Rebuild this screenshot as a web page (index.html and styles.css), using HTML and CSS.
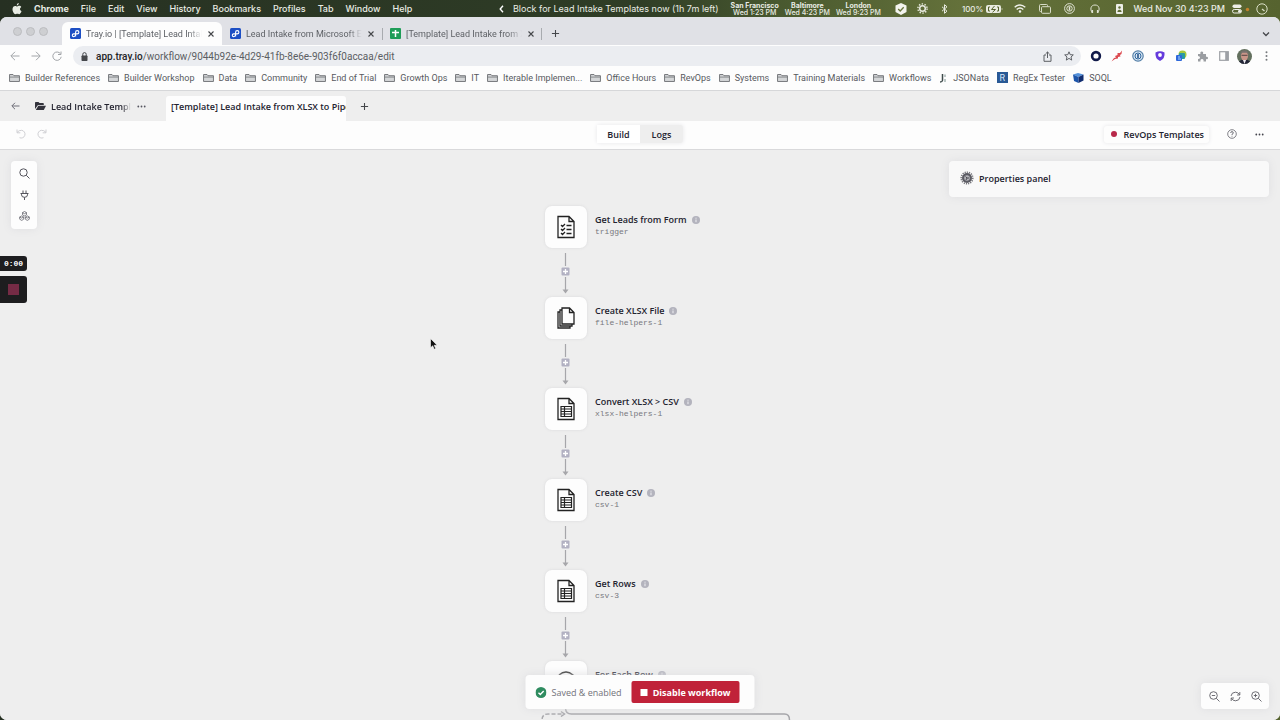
FILE: index.html
```html
<!DOCTYPE html>
<html lang="en">
<head>
    <meta charset="UTF-8">
    <meta name="viewport" content="width=device-width, initial-scale=1.0">
    <title>Tray.io | [Template] Lead Intake</title>
    <link rel="stylesheet" href="styles.css">
</head>
<body>
    <!-- shared icons -->
    <svg class="defs" width="0" height="0" aria-hidden="true">
        <symbol id="folder" viewBox="0 0 12 10"><path d="M.6 8.8V1.2h3.8l1 1.3h6v6.3z" fill="#d4d6d8" stroke="#6c6f73"/><path d="M.8 4h10.4" stroke="#6c6f73" stroke-width=".8"/></symbol>
        <symbol id="tray" viewBox="0 0 11 11"><rect width="11" height="11" rx="1.5" fill="#1d4fc4"/><path d="M5.6 8.6V4.2c0-1 .6-1.6 1.6-1.6s1.7.7 1.7 1.6-.7 1.7-1.7 1.7H3.7c-.8 0-1.4.5-1.4 1.3s.6 1.4 1.4 1.4 1.5-.6 1.5-1.4" fill="none" stroke="#fff" stroke-width="1.1"/></symbol>
        <symbol id="close" viewBox="0 0 8 8"><path d="M1.5 1.5l5 5m0-5l-5 5" stroke="#45474b" stroke-width="1.1"/></symbol>
        <symbol id="plus" viewBox="0 0 10 10"><path d="M5 1v8M1 5h8" stroke="#45474b" stroke-width="1.2"/></symbol>
        <symbol id="info" viewBox="0 0 8 8"><circle cx="4" cy="4" r="4" fill="#b3b3bd"/><path d="M4 3.5v2.7M4 1.7v1" stroke="#f0f0f4" stroke-width="1"/></symbol>
        <symbol id="sheet" viewBox="0 0 18 24"><path d="M1 1.5h11l5 5v16H1zM12 1.5v5h5" fill="none" stroke="#222" stroke-width="1.3"/><path d="M4 9.5h10.5v10H4zM4 12h10.5M4 14.5h10.5M4 17h10.5M7.5 9.5v10" fill="none" stroke="#222" stroke-width="1.2"/></symbol>
        <symbol id="connector" viewBox="0 0 42 49"><path d="M20.500 5v13M20.500 29v14" stroke="#a6a6aa" stroke-width="1.2"/><path d="M17.500 41.500h6l-3 4z" fill="#a6a6aa"/><rect x="16.500" y="19.500" width="8" height="8" rx="1" fill="#b2b1c2"/><path d="M20.500 21v5M18 23.500h5" stroke="#fff" stroke-width="1.3"/></symbol>
    </svg>

    <header class="menubar">
        <nav class="menus">
            <svg class="apple" width="10" height="12" viewBox="0 0 10 12" fill="#e9ece4"><path d="M6.800 0c0 1.300-.9 2.300-2 2.400C4.700 1.200 5.700.2 6.800 0zM9.300 4C8.500 4.500 8 5.200 8 6.100c0 1 .6 1.800 1.500 2.200-.6 1.600-1.500 2.900-2.400 2.900-.7 0-1-.4-1.900-.4s-1.200.4-1.800.4C2.100 11.200.5 8.700.5 6.300.5 4.100 1.800 2.900 3.200 2.900c.9 0 1.400.5 2 .5s1.200-.6 2.200-.6c.8 0 1.500.5 1.900 1.200z"/></svg>
            <b>Chrome</b><span>File</span><span>Edit</span><span>View</span><span>History</span><span>Bookmarks</span><span>Profiles</span><span>Tab</span><span>Window</span><span>Help</span>
        </nav>
        <div class="status">
            <div class="event"><svg width="5" height="8" viewBox="0 0 5 8"><path d="M4 .8L1.200 4 4 7.200" fill="none" stroke="#fff" stroke-width="1.400"/></svg><span>Block for Lead Intake Templates now (1h 7m left)</span></div>
            <div class="clocks">
                <div><b>San Francisco</b>Wed 1:23 PM</div>
                <div><b>Baltimore</b>Wed 4:23 PM</div>
                <div><b>London</b>Wed 9:23 PM</div>
            </div>
            <div class="tray-icons">
                <svg width="12" height="12" viewBox="0 0 12 12"><path d="M6 0l5.500 2.500v6.500L6 12 .5 9V2.500z" fill="#f3f4ee"/><path d="M3.200 6l2 2 3.500-3.800" fill="none" stroke="#68753d" stroke-width="1.300"/></svg>
                <svg width="11" height="11" viewBox="0 0 11 11" fill="none" stroke="#e8eadf"><circle cx="5.500" cy="5.500" r="2.800" stroke-width="1.500"/><circle cx="5.500" cy="5.500" r="4.600" stroke-width="1.400" stroke-dasharray="1.400 1.500"/></svg>
                <svg width="7" height="10" viewBox="0 0 7 10" fill="none" stroke="#e8eadf"><path d="M1 2.800l5 4.400L3.500 9.300V.7L6 2.800 1 7.200"/></svg>
            </div>
            <div class="battery"><span>100%</span><svg width="17" height="8" viewBox="0 0 17 8"><rect width="15" height="8" rx="2" fill="#e8eadf"/><path d="M16 3v2" stroke="#a9b08c"/><path d="M4 2H2.500v4H4M11 2h1.500v4H11M8.500 1L5.500 4.500h4L6.500 7.300" fill="none" stroke="#56632f"/></svg></div>
            <div class="tray-icons wide">
                <svg width="12" height="9" viewBox="0 0 12 9" fill="none" stroke="#f0f1ea" stroke-width="1.400"><path d="M.7 3.300q5.300-4.600 10.600 0M2.700 5.500q3.300-2.800 6.600 0"/><circle cx="6" cy="7.500" r=".6"/></svg>
                <svg width="12" height="10" viewBox="0 0 12 10" fill="none" stroke="#d7dbc7"><path d="M2.500 7.500h-1q-1 0-1-1v-5q0-1 1-1h6q1 0 1 1v1"/><rect x="2.500" y="2.700" width="9" height="6.600" rx="1"/></svg>
                <svg width="11" height="11" viewBox="0 0 11 11" fill="none" stroke="#e0e3d4"><circle cx="5.500" cy="5.500" r="4.900"/><circle cx="5.500" cy="5.500" r="2.700"/><path d="M5.500 3.500v4" stroke-width="1.500"/></svg>
                <svg width="10" height="10" viewBox="0 0 10 10" fill="none" stroke="#e0e3d4"><path d="M2.200 8.500C0 6 .3 1 5 1s5 5 2.800 7.500" /><path d="M2.300 6v3M7.700 6v3" stroke-width="1.600"/></svg>
                <svg width="7" height="10" viewBox="0 0 7 10"><rect width="7" height="10" rx="1" fill="#edeee7"/><circle cx="3.500" cy="3.500" r="1.200" fill="#5c6a34"/><path d="M1.500 7q2-2.500 4 0v1h-4z" fill="#5c6a34"/></svg>
            </div>
            <span class="date">Wed Nov 30 4:23 PM</span>
            <svg width="18" height="10" viewBox="0 0 18 10"><rect x=".5" y=".5" width="9" height="3.500" rx="1.750" fill="#edeee7"/><rect x=".5" y="5.500" width="9" height="3.500" rx="1.750" fill="none" stroke="#edeee7"/><circle cx="7.500" cy="7.200" r="1.500" fill="#edeee7"/><circle cx="15.500" cy="5.500" r="1.700" fill="#c3812c"/></svg>
            <svg width="12" height="12" viewBox="0 0 12 12" fill="none" stroke="#dbe0c8"><circle cx="6" cy="6" r="5.200"/><path d="M6 6l2.500 2" stroke-width="1.300"/></svg>
        </div>
    </header>

    <div class="window">
        <div class="tabstrip">
            <div class="lights"><i></i><i></i><i></i></div>
            <div class="tab active"><svg width="11" height="11"><use href="#tray"/></svg><span class="title">Tray.io | [Template] Lead Intake</span><button aria-label="Close tab"><svg width="8" height="8"><use href="#close"/></svg></button></div>
            <div class="tab"><svg width="11" height="11"><use href="#tray"/></svg><span class="title">Lead Intake from Microsoft Exc</span><button aria-label="Close tab"><svg width="8" height="8"><use href="#close"/></svg></button></div>
            <div class="tab ruled"><svg width="11" height="11" viewBox="0 0 11 11"><rect width="11" height="11" rx="1" fill="#1f9d58"/><path d="M5.500 2v7M2 4.500h7" stroke="#fff" stroke-width="1.500"/></svg><span class="title">[Template] Lead Intake from X</span><button aria-label="Close tab"><svg width="8" height="8"><use href="#close"/></svg></button></div>
            <button class="newtab" aria-label="New tab"><svg width="9" height="9"><use href="#plus"/></svg></button>
            <button class="chevron" aria-label="Search tabs"><svg width="8" height="6" viewBox="0 0 8 6"><path d="M1 1.500l3 3 3-3" fill="none" stroke="#45474b" stroke-width="1.300"/></svg></button>
        </div>

        <div class="navbar">
            <div class="navbuttons">
                <button aria-label="Back"><svg width="10" height="10" viewBox="0 0 10 10" fill="none" stroke="#a2a5a9"><path d="M9.500 5H1M5 .8L.8 5 5 9.200"/></svg></button>
                <button aria-label="Forward"><svg width="10" height="10" viewBox="0 0 10 10" fill="none" stroke="#a2a5a9"><path d="M.5 5H9M5 .8L9.200 5 5 9.200"/></svg></button>
                <button aria-label="Reload"><svg width="10" height="10" viewBox="0 0 10 10" fill="none" stroke="#a2a5a9"><path d="M8.500 2.800A4.200 4.200 0 1 0 9.200 5.800M9 .5v3H6"/></svg></button>
            </div>
            <div class="address">
                <svg width="7" height="9" viewBox="0 0 7 9"><rect x=".5" y="3.500" width="6" height="5.500" rx=".7" fill="#45474b"/><path d="M1.800 4V2.300a1.700 1.700 0 0 1 3.400 0V4" fill="none" stroke="#45474b"/></svg>
                <a href="#"><strong>app.tray.io</strong>/workflow/9044b92e-4d29-41fb-8e6e-903f6f0accaa/edit</a>
                <button aria-label="Share"><svg width="9" height="11" viewBox="0 0 9 11" fill="none" stroke="#5d6065"><path d="M3 4H1v6.300h7V4H6M4.500 7V1M2.600 2.800L4.500 1l1.900 1.800"/></svg></button>
                <button aria-label="Bookmark"><svg width="10" height="10" viewBox="0 0 10 10" fill="none" stroke="#5d6065"><path d="M5 .8l1.200 2.900 3.100.2L7 6l.7 3.100L5 7.400 2.300 9.100 3 6 .7 3.900l3.100-.2z"/></svg></button>
            </div>
            <div class="extensions">
                <svg width="12" height="12" viewBox="0 0 12 12"><circle cx="6" cy="6" r="3.900" fill="none" stroke="#111a4a" stroke-width="2.600"/></svg>
                <svg width="12" height="12" viewBox="0 0 12 12"><path d="M.5 11.500L3 8 5 7.500 4 6 6.500 5 6.500 3 9 3 11 .5 10.500 4 9 5 9.500 6.500 7 7 7 8.500 4 9z" fill="#dc4a50"/></svg>
                <svg width="12" height="12" viewBox="0 0 12 12" fill="none"><circle cx="6" cy="6" r="5.200" fill="#dbe8f5" stroke="#5681a8" stroke-width="1.200"/><circle cx="6" cy="6" r="3" stroke="#2d669e"/><path d="M6 4v4" stroke="#1b4b80" stroke-width="1.500"/></svg>
                <svg width="12" height="12" viewBox="0 0 12 12"><path d="M1.500 2.500Q6 0 10.500 2.500q.8 6-4.500 8.500Q.7 8.500 1.500 2.500z" fill="#653bdc"/><circle cx="6" cy="5" r="1.900" fill="#fff"/></svg>
                <svg width="12" height="12" viewBox="0 0 12 12"><circle cx="7.500" cy="4.500" r="4" fill="#a8c83e"/><rect x="4" y="3" width="6" height="6" rx="1" fill="#2a9ba3"/><rect x="1" y="5" width="6" height="6" rx="1" fill="#2f68da"/><path d="M3 7h2M3 9h3" stroke="#a8d5ff"/></svg>
                <svg width="11" height="11" viewBox="0 0 11 11"><path d="M1 3h2.500Q2.800.5 4.800.5T6 3h3v2.800q2-.5 2 1.200T9 8v2.500H6.500Q7 8 5 8t-1.500 2.500H1V8q2 0 2-1.500T1 5z" fill="#9a9da1"/></svg>
                <svg width="10" height="10" viewBox="0 0 10 10"><rect x=".7" y=".7" width="8.600" height="8.600" fill="none" stroke="#9da0a5" stroke-width="1.200"/><path d="M6.200 1h3v8h-3z" fill="#9da0a5"/></svg>
                <svg width="15" height="15" viewBox="0 0 15 15"><clipPath id="face"><circle cx="7.500" cy="7.500" r="7.500"/></clipPath><g clip-path="url(#face)"><path d="M0 0h15v15H0z" fill="#63705e"/><path d="M1.500 15q0-4.500 6-4.500t6 4.500z" fill="#242638"/><ellipse cx="7.500" cy="6.800" rx="3.600" ry="4.800" fill="#c99588"/><path d="M3.500 6Q3 1.200 7.500 1.200T11.500 6L10 3.800H5z" fill="#77716d"/><path d="M4.500 6.300h6" stroke="#463b3c" stroke-width=".9"/><path d="M6 11l1.500 4L9 11z" fill="#eceaf0"/></g></svg>
                <svg width="3" height="10" viewBox="0 0 3 10" fill="#76797d"><circle cx="1.500" cy="1.300" r="1"/><circle cx="1.500" cy="5" r="1"/><circle cx="1.500" cy="8.700" r="1"/></svg>
            </div>
        </div>

        <nav class="bookmarks">
            <a href="#"><svg width="11" height="10"><use href="#folder"/></svg>Builder References</a>
            <a href="#"><svg width="11" height="10"><use href="#folder"/></svg>Builder Workshop</a>
            <a href="#"><svg width="11" height="10"><use href="#folder"/></svg>Data</a>
            <a href="#"><svg width="11" height="10"><use href="#folder"/></svg>Community</a>
            <a href="#"><svg width="11" height="10"><use href="#folder"/></svg>End of Trial</a>
            <a href="#"><svg width="11" height="10"><use href="#folder"/></svg>Growth Ops</a>
            <a href="#"><svg width="11" height="10"><use href="#folder"/></svg>IT</a>
            <a href="#"><svg width="11" height="10"><use href="#folder"/></svg>Iterable Implemen...</a>
            <a href="#"><svg width="11" height="10"><use href="#folder"/></svg>Office Hours</a>
            <a href="#"><svg width="11" height="10"><use href="#folder"/></svg>RevOps</a>
            <a href="#"><svg width="11" height="10"><use href="#folder"/></svg>Systems</a>
            <a href="#"><svg width="11" height="10"><use href="#folder"/></svg>Training Materials</a>
            <a href="#"><svg width="11" height="10"><use href="#folder"/></svg>Workflows</a>
            <a href="#"><svg width="9" height="10" viewBox="0 0 9 10" fill="none" stroke="#3d4a4a"><path d="M3.500 1v6.500Q3.300 9 1 9" stroke-width="1.500"/><path d="M6 1.500v2.500M6 6v3" stroke="#7d9290"/></svg>JSONata</a>
            <a href="#"><svg width="11" height="11" viewBox="0 0 11 11"><rect width="11" height="11" fill="#295995"/><text x="2.500" y="8.800" font-size="9" fill="#d9e8fa" font-family="Roboto">R</text></svg>RegEx Tester</a>
            <a href="#"><svg width="11" height="10" viewBox="0 0 11 10"><path d="M0 1.500L5 0l5.500 1.500L5.500 4z" fill="#5390da"/><path d="M0 1.500L5.500 4v6L1 8z" fill="#1c55ab"/><path d="M5.500 4l5-2.500v6L5.500 10z" fill="#112d70"/></svg>SOQL</a>
        </nav>

        <div class="apptabs">
            <button aria-label="Back to project"><svg width="9" height="8" viewBox="0 0 9 8" fill="none" stroke="#6f6f78"><path d="M8.500 4H1M4 .8L.8 4 4 7.200"/></svg></button>
            <a class="project" href="#"><svg width="11" height="8" viewBox="0 0 11 8" fill="#33333c"><path d="M0 7V.8Q0 0 .8 0h2.700l1 1H8q.8 0 .8.8V3H3z"/><path d="M3.300 3.700H11L8.800 8H.8z"/></svg><span class="title">Lead Intake Templa</span></a>
            <button aria-label="Project menu"><svg width="9" height="3" viewBox="0 0 9 3" fill="#55555f"><circle cx="1.300" cy="1.500" r=".9"/><circle cx="4.500" cy="1.500" r=".9"/><circle cx="7.700" cy="1.500" r=".9"/></svg></button>
            <div class="workflow-tab"><span>[Template] Lead Intake from XLSX to Pipe</span></div>
            <button aria-label="Open workflow"><svg width="9" height="9"><use href="#plus"/></svg></button>
        </div>

        <div class="toolbar">
            <div class="history">
                <button aria-label="Undo"><svg width="10" height="10" viewBox="0 0 10 10" fill="none" stroke="#cfcfd3"><path d="M1 .5v3.300h3.300M1 3.500Q3 1 5.700 1.300A3.900 3.900 0 1 1 3.500 8.700"/></svg></button>
                <button aria-label="Redo"><svg width="10" height="10" viewBox="0 0 10 10" fill="none" stroke="#cfcfd3"><path d="M9 .5v3.300H5.700M9 3.500Q7 1 4.300 1.300A3.900 3.900 0 1 0 6.500 8.700"/></svg></button>
            </div>
            <div class="modes"><button class="on">Build</button><button>Logs</button></div>
            <div class="account">
                <button class="workspace"><i></i>RevOps Templates</button>
                <button aria-label="Help"><svg width="10" height="10" viewBox="0 0 10 10" fill="none" stroke="#62626b"><circle cx="5" cy="5" r="4.300" stroke-width=".8"/><path d="M3.700 4q0-1.400 1.300-1.400T6.300 4Q6.300 4.800 5 5.300V6M5 6.800v.8" stroke-width=".9"/></svg></button>
                <button aria-label="More"><svg width="9" height="3" viewBox="0 0 9 3" fill="#44444d"><circle cx="1.300" cy="1.500" r=".9"/><circle cx="4.500" cy="1.500" r=".9"/><circle cx="7.700" cy="1.500" r=".9"/></svg></button>
            </div>
        </div>

        <main class="canvas">
            <div class="flow">
                <div class="node"><div class="box"><svg width="18" height="24" viewBox="0 0 18 24" fill="none" stroke="#222" stroke-width="1.300"><path d="M1 1.500h11l5 5v16H1zM12 1.500v5h5"/><path d="M4 10l1.500 1.500L8 9M4 14l1.500 1.500L8 13M4 18l1.500 1.500L8 17M9.500 10.500h5M9.500 14.500h5M9.500 18.500h5"/></svg></div><div class="label"><h2>Get Leads from Form<svg width="8" height="8"><use href="#info"/></svg></h2><code>trigger</code></div></div>
                <svg class="connector" width="42" height="49"><use href="#connector"/></svg>
                <div class="node"><div class="box"><svg width="18" height="22" viewBox="0 0 18 22" fill="none" stroke="#222" stroke-width="1.300"><path d="M5 1h7.500L17 5.500V17H5zM12.500 1v4.500H17"/><path d="M5 3H3v16h12v-2M3 5H1v16h12v-2"/></svg></div><div class="label"><h2>Create XLSX File<svg width="8" height="8"><use href="#info"/></svg></h2><code>file-helpers-1</code></div></div>
                <svg class="connector" width="42" height="49"><use href="#connector"/></svg>
                <div class="node"><div class="box"><svg width="18" height="24"><use href="#sheet"/></svg></div><div class="label"><h2>Convert XLSX &gt; CSV<svg width="8" height="8"><use href="#info"/></svg></h2><code>xlsx-helpers-1</code></div></div>
                <svg class="connector" width="42" height="49"><use href="#connector"/></svg>
                <div class="node"><div class="box"><svg width="18" height="24"><use href="#sheet"/></svg></div><div class="label"><h2>Create CSV<svg width="8" height="8"><use href="#info"/></svg></h2><code>csv-1</code></div></div>
                <svg class="connector" width="42" height="49"><use href="#connector"/></svg>
                <div class="node"><div class="box"><svg width="18" height="24"><use href="#sheet"/></svg></div><div class="label"><h2>Get Rows<svg width="8" height="8"><use href="#info"/></svg></h2><code>csv-3</code></div></div>
                <svg class="connector" width="42" height="49"><use href="#connector"/></svg>
                <div class="node"><div class="box"><svg width="20" height="22" viewBox="0 0 20 22" fill="none" stroke="#222" stroke-width="1.500"><path d="M3 4q7-6 14 0a9 9 0 0 1-14 13"/></svg></div><div class="label"><h2>For Each Row<svg width="8" height="8"><use href="#info"/></svg></h2></div></div>
                <svg class="branch" width="250" height="40" viewBox="0 0 250 40" fill="none" stroke="#a6a6aa" stroke-width="1.500"><path d="M24.500 0v5q0 6 6 6h213q5 0 5 6v23"/><path d="M1 40V17q0-6 6-6h14" stroke-dasharray="4 2"/><path d="M20 8.500l3.500 2.500-3.500 2.500"/></svg>
            </div>

            <div class="tools">
                <button aria-label="Search"><svg width="11" height="11" viewBox="0 0 11 11" fill="none" stroke="#55555d"><circle cx="4.500" cy="4.500" r="3.700"/><path d="M7.300 7.300l3.200 3.200"/></svg></button>
                <button aria-label="Connectors"><svg width="9" height="10" viewBox="0 0 9 10" fill="none" stroke="#55555d"><path d="M.5 3.500h8M1.500 3.500v1.300q0 2.500 3 2.500t3-2.500V3.500M3 .5v3M6 .5v3M4.500 7.300V10"/></svg></button>
                <button aria-label="Resources"><svg width="11" height="10" viewBox="0 0 11 10" fill="none" stroke="#66666e" stroke-width=".8"><path d="M5.500.5l2 1.100v2.200l-2 1.100-2-1.100V1.600zM2.700 4.900l2 1.100v2.200l-2 1.200-2-1.200V6zM8.300 4.900l2 1.100v2.200l-2 1.200-2-1.200V6zM3.500 1.600l2 1.100 2-1.100M.7 6l2 1.100 2-1.100M6.300 6l2 1.100 2-1.100"/></svg></button>
            </div>

            <section class="properties">
                <svg width="14" height="14" viewBox="0 0 14 14" fill="none"><circle cx="7" cy="7" r="5.800" stroke="#77777d" stroke-width="1.600" stroke-dasharray="1.200 1"/><circle cx="7" cy="7" r="3.900" fill="#b5b5ba" stroke="#5b5b63" stroke-width="2.200"/><path d="M5.500 5.500L7 7h2M7 7L6 9" stroke="#4b4b53"/></svg>
                <h2>Properties panel</h2>
            </section>

            <div class="recorder"><time>0:00</time><button aria-label="Stop recording"><i></i></button></div>

            <div class="publish">
                <svg width="11" height="11" viewBox="0 0 11 11"><circle cx="5.500" cy="5.500" r="5.500" fill="#2f8c60"/><path d="M3 5.700l1.800 1.800L8.200 4" fill="none" stroke="#fff" stroke-width="1.400"/></svg>
                <span>Saved &amp; enabled</span>
                <button><i></i>Disable workflow</button>
            </div>

            <div class="zoom">
                <button aria-label="Zoom out"><svg width="11" height="11" viewBox="0 0 11 11" fill="none" stroke="#5d5d65" stroke-width=".9"><circle cx="4.500" cy="4.500" r="3.800"/><path d="M7.300 7.300l3.200 3.200M2.800 4.500h3.400"/></svg></button>
                <button aria-label="Reset zoom"><svg width="11" height="11" viewBox="0 0 11 11" fill="none" stroke="#5d5d65" stroke-width=".9"><path d="M1 5Q1.500 1.200 5.500 1.200q2.700 0 4 2.500M9.800 1v3H7M10 6Q9.500 9.800 5.500 9.800q-2.700 0-4-2.500M1.200 10V7H4"/></svg></button>
                <button aria-label="Zoom in"><svg width="11" height="11" viewBox="0 0 11 11" fill="none" stroke="#5d5d65" stroke-width=".9"><circle cx="4.500" cy="4.500" r="3.800"/><path d="M7.300 7.300l3.200 3.200M2.800 4.500h3.400M4.500 2.800v3.400"/></svg></button>
            </div>

            <svg class="cursor" width="8" height="12" viewBox="0 0 8 12"><path d="M.5.5v9.300l2.200-2 1.500 3.500 1.500-.7-1.500-3.300h3z" fill="#111" stroke="#fff" stroke-width=".6"/></svg>
        </main>
    </div>
</body>
</html>
```

FILE: styles.css
```css
* {
    box-sizing: border-box;
}
body {
    margin: 0;
    height: 100vh;
    display: flex;
    flex-direction: column;
    overflow: hidden;
    background: linear-gradient(90deg, #263022 0%, #2f3d26 50%, #4b5b30 62%, #64713a 75%, #56632f 100%);
    font-family: "Open Sans", sans-serif;
    font-size: 9px;
    color: #23232f;
}
svg {
    flex: none;
    display: block;
}
button {
    display: flex;
    align-items: center;
    justify-content: center;
    padding: 0;
    border: none;
    background: none;
    font: inherit;
    color: inherit;
    cursor: pointer;
}
a {
    color: inherit;
    text-decoration: none;
}
h2 {
    margin: 0;
    font-size: 9px;
    font-weight: 600;
}
.defs {
    position: absolute;
}

/* macOS menu bar */
.menubar {
    height: 17px;
    display: flex;
    justify-content: space-between;
    align-items: center;
    padding: 0 12px;
    font-family: Inter, sans-serif;
    font-weight: 500;
    color: #e9ece4;
    white-space: nowrap;
}
.menus, .status, .event, .clocks, .battery {
    display: flex;
    align-items: center;
}
.menus {
    gap: 12px;
}
.event {
    gap: 9px;
    margin-right: 12px;
    font-weight: 400;
}
.clocks {
    gap: 6px;
    font-size: 7px;
    line-height: 7px;
    text-align: center;
    margin-right: 9px;
}
.clocks b {
    display: block;
}
.tray-icons {
    display: grid;
    grid-template-columns: repeat(3, 22px);
    justify-items: center;
    align-items: center;
}
.tray-icons.wide {
    grid-template-columns: repeat(5, 25px);
}
.battery {
    gap: 3px;
    margin: 0 4px 0 6px;
    font-size: 8px;
}
.date {
    margin: 0 7px 0 1px;
}
.status > svg:last-child {
    margin-left: 6px;
}

/* browser window */
.window {
    flex: 1;
    min-height: 0;
    display: flex;
    flex-direction: column;
    border-radius: 7px;
    overflow: hidden;
    background: #fdfdfd;
}
.tabstrip {
    height: 28px;
    display: flex;
    align-items: center;
    padding-right: 10px;
    background: #e0e1e6;
    font-family: Roboto, sans-serif;
    color: #5f6267;
}
.lights {
    width: 62px;
    display: flex;
    gap: 4px;
    padding-left: 13px;
}
.lights i {
    width: 9px;
    height: 9px;
    border-radius: 50%;
    background: #cecfd2;
    border: 1px solid #bcbdc0;
}
.tab {
    width: 160px;
    height: 23px;
    display: flex;
    align-items: center;
    gap: 5px;
    padding: 0 7px 0 8px;
    margin-top: 5px;
}
.tab.active {
    background: #fdfdfd;
    border-radius: 6px 6px 0 0;
}
.tab.ruled {
    background: linear-gradient(#a8abaf, #a8abaf) left / 1px 12px no-repeat, linear-gradient(#a8abaf, #a8abaf) right / 1px 12px no-repeat;
}
.title {
    flex: 1;
    overflow: hidden;
    white-space: nowrap;
    -webkit-mask-image: linear-gradient(90deg, #000 88%, transparent);
    mask-image: linear-gradient(90deg, #000 88%, transparent);
}
.newtab {
    margin: 5px 0 0 9px;
}
.chevron {
    margin: 5px 0 0 auto;
}
.navbar {
    height: 22px;
    display: flex;
    align-items: center;
    padding: 0 3px 0 4px;
}
.navbuttons {
    width: 69px;
    display: flex;
}
.navbuttons button {
    width: 21px;
}
.address {
    flex: 1;
    height: 20px;
    display: flex;
    align-items: center;
    gap: 12px;
    padding: 0 7px 0 8px;
    border-radius: 10px;
    background: #ebedf1;
    font-family: Roboto, sans-serif;
    font-size: 10px;
    color: #5b5e63;
}
.address a {
    flex: 1;
    margin-left: -4px;
}
.address strong {
    font-weight: 500;
    color: #232427;
}
.extensions {
    width: 192px;
    margin-left: 4px;
    display: grid;
    grid-template-columns: repeat(9, 1fr);
    justify-items: center;
    align-items: center;
}
.bookmarks {
    height: 24px;
    display: flex;
    align-items: center;
    gap: 8px;
    padding: 0 9px 2px;
    border-bottom: 1px solid #d6d7d9;
    font-family: Roboto, sans-serif;
    color: #57595d;
    white-space: nowrap;
}
.bookmarks a {
    display: flex;
    align-items: center;
    gap: 5px;
}

/* workflow tabs */
.apptabs {
    height: 30px;
    display: flex;
    align-items: center;
    padding-left: 11px;
    background: #eee;
    font-weight: 600;
}
.project {
    width: 96px;
    margin: 0 6px 0 15px;
    display: flex;
    align-items: center;
    gap: 5px;
}
.workflow-tab {
    width: 180px;
    height: 25px;
    margin: 5px 14px 0 20px;
    padding: 0 0 4px 5px;
    display: flex;
    align-items: center;
    overflow: hidden;
    background: #fdfdfd;
    border-radius: 3px 3px 0 0;
    white-space: nowrap;
}
.toolbar {
    height: 29px;
    display: grid;
    grid-template-columns: 1fr auto 1fr;
    align-items: center;
    padding: 0 16px 2px;
    border-bottom: 1px solid #d9d9db;
    font-weight: 600;
}
.history {
    display: flex;
    gap: 11px;
}
.modes {
    display: flex;
    background: #eee;
    border-radius: 3px;
    box-shadow: 0 0 4px #e6e6e8;
}
.modes button {
    width: 43px;
    height: 18px;
}
.modes .on {
    background: #fff;
}
.account {
    display: flex;
    justify-content: flex-end;
    align-items: center;
    gap: 18px;
}
.account .workspace {
    height: 17px;
    gap: 7px;
    padding: 0 5px 0 7px;
    border-radius: 3px;
    box-shadow: 0 0 4px #e6e6e8;
}
.workspace i {
    width: 6px;
    height: 6px;
    border-radius: 50%;
    background: #b8284a;
}

/* canvas */
.canvas {
    flex: 1;
    min-height: 0;
    position: relative;
    overflow: hidden;
    background: #eee;
}
.flow {
    padding-top: 56px;
    margin-left: calc(50% - 95px);
}
.node {
    display: flex;
    gap: 8px;
    height: 42px;
}
.box {
    width: 42px;
    height: 42px;
    display: flex;
    align-items: center;
    justify-content: center;
    background: #fdfdfd;
    border-radius: 7px;
    box-shadow: 0 0 3px #d8d8da;
}
.label {
    padding-top: 8px;
}
.label h2 {
    display: flex;
    align-items: center;
    gap: 5px;
    line-height: 12px;
}
.label code {
    display: block;
    font-family: "Liberation Mono", monospace;
    font-size: 8px;
    line-height: 12px;
    color: #77777d;
}
.branch {
    margin-left: -4px;
}
.tools, .properties, .publish, .zoom {
    position: absolute;
    display: flex;
    align-items: center;
    background: #fdfdfd;
    border-radius: 4px;
    box-shadow: 0 0 8px #dedee0;
}
.tools {
    top: 11px;
    left: 11px;
    width: 26px;
    flex-direction: column;
    gap: 11px;
    padding: 7px 0 8px;
}
.properties {
    top: 11px;
    right: 11px;
    width: 25%;
    height: 36px;
    gap: 5px;
    padding: 0 11px 2px;
    background: #f9f9f9;
}
.recorder {
    position: absolute;
    top: 106px;
    left: 0;
    width: 27px;
    display: flex;
    flex-direction: column;
    gap: 5px;
    font-family: "Liberation Mono", monospace;
    font-size: 8px;
    font-weight: bold;
    line-height: 15px;
    text-align: center;
    color: #fff;
}
.recorder time, .recorder button {
    background: #1d1d1f;
    border-radius: 0 3px 3px 0;
}
.recorder button {
    height: 27px;
}
.recorder i {
    width: 11px;
    height: 11px;
    background: #752b45;
}
.publish {
    bottom: 11px;
    left: 50%;
    transform: translateX(-50%);
    height: 34px;
    gap: 5px;
    padding: 0 15px 0 10px;
    color: #72727a;
    white-space: nowrap;
}
.publish button {
    height: 22px;
    gap: 5px;
    margin-left: 5px;
    padding: 0 9px;
    border-radius: 2px;
    background: #c02239;
    font-weight: 700;
    color: #fff;
}
.publish i {
    width: 7px;
    height: 7px;
    background: #fff;
}
.zoom {
    right: 11px;
    bottom: 11px;
    height: 26px;
    gap: 10px;
    padding: 0 7px 0 8px;
}
.cursor {
    position: absolute;
    top: 188px;
    left: 430px;
}
```
